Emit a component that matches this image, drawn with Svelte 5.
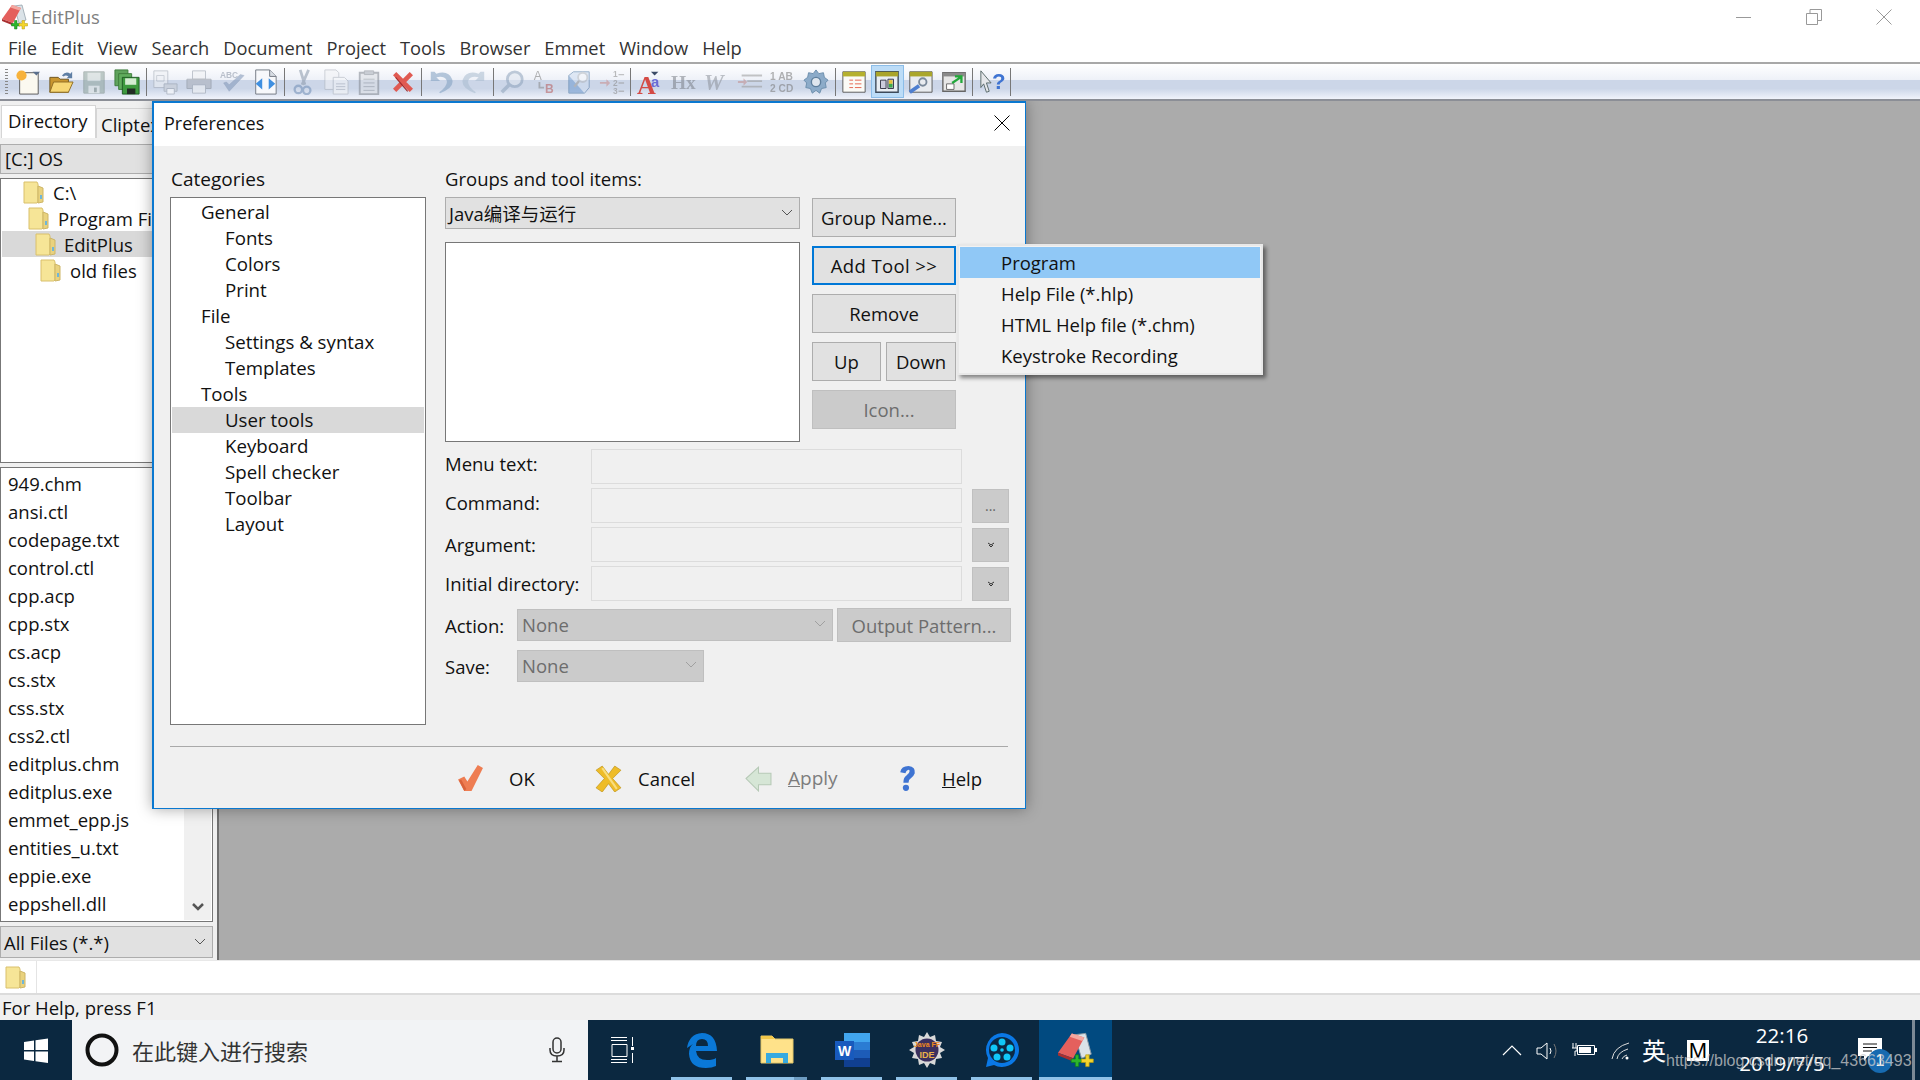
<script>
  const menus = ['File','Edit','View','Search','Document','Project','Tools','Browser','Emmet','Window','Help'];
  const files = ['949.chm','ansi.ctl','codepage.txt','control.ctl','cpp.acp','cpp.stx','cs.acp','cs.stx','css.stx','css2.ctl','editplus.chm','editplus.exe','emmet_epp.js','entities_u.txt','eppie.exe','eppshell.dll'];
  const cats = [['General',0],['Fonts',1],['Colors',1],['Print',1],['File',0],['Settings & syntax',1],['Templates',1],['Tools',0],['User tools',1],['Keyboard',1],['Spell checker',1],['Toolbar',1],['Layout',1]];
  const dirs = [['C:\\','d0'],['Program Files','d1'],['EditPlus','d2'],['old files','d3']];
</script>

{#snippet folder()}
  <svg class="fold" viewBox="0 0 22 24"><path d="M1 2h13l1 2v18l-1 1H1z" fill="#f6e597" stroke="#d9c06c"/><path d="M15 6l5 2v14l-5 1z" fill="#e9d27e" stroke="#cdb566"/><rect x="17" y="15" width="2" height="4" fill="#6fb6d8"/></svg>
{/snippet}

{#snippet logo(s)}
  <svg width={s} height={s} viewBox="0 0 26 26">
    <path d="M12 2l8-1 4 15-7 3z" fill="#dbe3e8" stroke="#8b9aa3" stroke-width=".7"/>
    <path d="M0 15L10 1l9 3-8 15z" fill="#e4605d"/><path d="M10 1l9 3-1.500 2.500-9-3z" fill="#f3a7a0"/><path d="M0 15l11 4-1 2L0 17z" fill="#a92f30"/>
    <path d="M9.500 19.500h3v-3h2.500v3h3V22h-3v3h-2.500v-3h-3z" fill="#2db52b" stroke="#0f7a1b" stroke-width=".5"/>
    <path d="M17 19.500h3v-3h2.500v3h3V22h-3v3H20v-3h-3z" fill="#f4d52c" stroke="#b59a10" stroke-width=".5"/>
  </svg>
{/snippet}

<div class="screen">
  <header class="title">
    {@render logo(26)}
    <span class="appname">EditPlus</span>
    <div class="winbtns">
      <svg width="16" height="16" viewBox="0 0 16 16"><path d="M0 8.500h15" stroke="#999" fill="none"/></svg>
      <svg width="16" height="16" viewBox="0 0 16 16"><path d="M.5 4.500h11v11H.5zM4 4V.5h11.500v11H12" stroke="#999" fill="none"/></svg>
      <svg width="16" height="16" viewBox="0 0 16 16"><path d="M.5.500l15 15M15.500.500l-15 15" stroke="#999" fill="none"/></svg>
    </div>
  </header>
  <nav class="menubar">
    {#each menus as m}<span>{m}</span>{/each}
  </nav>

  <div class="toolbar">
    <div class="grip"></div>
    <div class="tb"><svg viewBox="0 0 28 28"><path d="M5 4h20v23H5z" fill="#fbf9f0" stroke="#555"/><circle cx="7" cy="7" r="5.500" fill="#f7b23b"/><path d="M19 3h8l-4 4z" fill="#5a6f8c"/></svg></div>
    <div class="tb"><svg viewBox="0 0 28 28"><path d="M2 9h9l2 2h9v14H2z" fill="#c9962f" stroke="#6a5320"/><path d="M2 25l4-11h21l-5 11z" fill="#f7d774" stroke="#8c6a21"/><path d="M15 7q4-5 9-2l2-2v7h-6l2-2q-3-2-5 0z" fill="#5f7fa5"/></svg></div>
    <div class="tb off"><svg viewBox="0 0 28 28"><path d="M3 3h22v23H3z" fill="#8fa49c" stroke="#75857f"/><path d="M7 4h14v9H7z" fill="#cfd8d4"/><path d="M8 18h12v8H8z" fill="#dfe5e2"/><path d="M14 20h3v5h-3z" fill="#75857f"/></svg></div>
    <div class="tb"><svg viewBox="0 0 28 28"><path d="M1 1h14v17H1z" fill="#5fa35c" stroke="#3c7a3a"/><path d="M5 5h14v17H5z" fill="#60ad5d" stroke="#3c7a3a"/><path d="M9 9h18v18H9z" fill="#3d9a3e" stroke="#1e5a24"/><path d="M12 10h12v7H12z" fill="#d4ecd2"/><path d="M14 21h9v6h-9z" fill="#222d25"/></svg></div>
    <div class="sep"></div>
    <div class="tb off"><svg viewBox="0 0 28 28"><path d="M2 2h15v18H2z" fill="#eef0f4" stroke="#9aa2ad"/><path d="M5 7h8v6H5z" fill="none" stroke="#a9b0ba"/><path d="M13 16h14v8H13z" fill="#c7ccd3" stroke="#8f97a3"/><path d="M16 21h8v6h-8z" fill="#fff" stroke="#8f97a3"/></svg></div>
    <div class="tb off"><svg viewBox="0 0 28 28"><path d="M7 2h14v9H7z" fill="#f1f2f4" stroke="#8f97a3"/><path d="M1 11h26v10H1z" fill="#a8aeb7" stroke="#7f8791"/><path d="M7 17h14v9H7z" fill="#f1f2f4" stroke="#8f97a3"/></svg></div>
    <div class="tb off"><svg viewBox="0 0 28 28"><text x="1" y="10" class="abc">ABC</text><path d="M5 15l6 9L27 7l-4-1-12 11-3-3z" fill="#7f96b8" stroke="#66799a" stroke-width=".5"/></svg></div>
    <div class="tb"><svg viewBox="0 0 28 28"><path d="M4 1h15l7 7v19H4z" fill="#f7f8fb" stroke="#6f7680"/><path d="M19 1v7h7" fill="#d8dde4" stroke="#6f7680"/><path d="M11 10l-7 6 7 6zM18 10l7 6-7 6z" fill="#3f8fe0"/></svg></div>
    <div class="sep"></div>
    <div class="tb off"><svg viewBox="0 0 28 28"><path d="M20 1l-7 16M11 1l5 16" stroke="#8a98aa" stroke-width="3" fill="none"/><circle cx="9" cy="22" r="4" fill="none" stroke="#6f8db5" stroke-width="2.500"/><circle cx="18" cy="23" r="4" fill="none" stroke="#6f8db5" stroke-width="2.500"/></svg></div>
    <div class="tb off"><svg viewBox="0 0 28 28"><path d="M2 1h12l3 3v18H2z" fill="#f2f3f5" stroke="#a6acb5"/><path d="M11 9h12l4 4v14H11z" fill="#f7f8f9" stroke="#a6acb5"/><path d="M14 16h10M14 19h10M14 22h10" stroke="#a6acb5" fill="none"/></svg></div>
    <div class="tb off"><svg viewBox="0 0 28 28"><path d="M4 4h20v23H4z" fill="#dcdfe3" stroke="#80868f" stroke-width="2"/><path d="M9 2h10v4H9z" fill="#a6acb5" stroke="#80868f"/><path d="M8 11h12M8 15h12M8 19h12M8 23h12" stroke="#8d939c" fill="none"/></svg></div>
    <div class="tb"><svg viewBox="0 0 28 28"><path d="M5 5l18 18M23 5L5 23" stroke="#e05a52" stroke-width="5" fill="none"/><path d="M6 9l13 15" stroke="#a02a2a" stroke-width="1.200" fill="none"/></svg></div>
    <div class="sep"></div>
    <div class="tb off"><svg viewBox="0 0 28 28"><path d="M3 3v10h10l-4-4q8-2 11 3 2 6-8 13l1 1q16-6 13-15Q22 1 9 5L7 3z" fill="#7f9fc0"/></svg></div>
    <div class="tb off"><svg viewBox="0 0 28 28"><path d="M25 3v10H15l4-4q-8-2-11 3-2 6 8 13l-1 1Q-1 20 2 11 6 1 19 5l2-2z" fill="#a9bccf"/></svg></div>
    <div class="sep"></div>
    <div class="tb off"><svg viewBox="0 0 28 28"><circle cx="17" cy="11" r="8" fill="#dfe6ef" stroke="#8ea3bb" stroke-width="3"/><path d="M11 17l-8 8" stroke="#8ea3bb" stroke-width="4" fill="none"/></svg></div>
    <div class="tb off"><svg viewBox="0 0 28 28"><text x="2" y="12" class="lt gr">A</text><text x="14" y="26" class="lt rd">B</text><path d="M8 14v6h5" stroke="#888" stroke-width="2" fill="none"/></svg></div>
    <div class="tb off"><svg viewBox="0 0 28 28"><path d="M3 7h17v19H3z" fill="#6d99cf" stroke="#47729f"/><path d="M3 7l5-4h17v17l-5 6" fill="#cddcf0" stroke="#47729f"/><circle cx="18" cy="9" r="5" fill="#f3f6fa" stroke="#b2b8bf" stroke-width="2"/><path d="M14 13l-5 6" stroke="#999" stroke-width="2.500"/></svg></div>
    <div class="tb off"><svg viewBox="0 0 28 28"><path d="M1 14h7v-3l4 4-4 4v-3H1z" fill="#c98c8c"/><text x="15" y="9" class="num">1</text><text x="15" y="18" class="num">2</text><text x="15" y="27" class="num">3</text><path d="M21 6h6M21 15h6M21 24h6" stroke="#999" stroke-width="1.500"/></svg></div>
    <div class="sep"></div>
    <div class="tb"><svg viewBox="0 0 28 28"><text x="0" y="27" class="biga">A</text><text x="15" y="19" class="smla">a</text><path d="M15 3h8l-4 4z" fill="#3a4a66"/></svg></div>
    <div class="tb off"><svg viewBox="0 0 28 28"><text x="1" y="22" class="hx">Hx</text></svg></div>
    <div class="tb off"><svg viewBox="0 0 28 28"><text x="1" y="23" class="wi">W</text></svg></div>
    <div class="tb off"><svg viewBox="0 0 28 28"><path d="M5 7h22M11 13h16M5 19h22" stroke="#999" stroke-width="2"/><path d="M1 13h6v-3l4 4-4 4v-3H1z" fill="#c28f8f"/></svg></div>
    <div class="tb off"><svg viewBox="0 0 28 28"><text x="0" y="12" class="ab">1 AB</text><text x="0" y="25" class="ab">2 CD</text></svg></div>
    <div class="tb"><svg viewBox="0 0 28 28"><path d="M14 1l3 4 5-1 1 5 4 3-3 3 1 5-5 1-2 5-4-3-4 3-2-5-5-1 1-5-3-3 4-3 1-5 5 1z" fill="#8cabc9" stroke="#6a8cab"/><circle cx="14" cy="14" r="5" fill="#dfe6ee" stroke="#5f7f9d" stroke-width="1.500"/></svg></div>
    <div class="sep"></div>
    <div class="tb"><svg viewBox="0 0 28 28"><path d="M2 3h24v22H2z" fill="#fbfbf7" stroke="#555"/><path d="M2 3h24v5H2z" fill="#b5b02e"/><path d="M9 12h4M15 12h7M9 16h4M15 16h7M9 20h4M15 20h7" stroke="#e4604b" fill="none"/></svg></div>
    <div class="tb on"><svg viewBox="0 0 28 28"><path d="M2 3h24v22H2z" fill="#e8edf2" stroke="#3c4a5a" stroke-width="1.500"/><path d="M2 3h24v5H2z" fill="#a9a42a"/><path d="M7 12h6v9H7zM15 11h6v10h-6z" fill="#ccd" stroke="#334"/><path d="M16 12h4v4h-4z" fill="#e6c13a"/><path d="M16 16h4v4h-4z" fill="#3eaa4b"/></svg></div>
    <div class="tb"><svg viewBox="0 0 28 28"><path d="M3 3h24v22H3z" fill="#e9ecf0" stroke="#555"/><path d="M3 3h24v5H3z" fill="#aaa62b"/><circle cx="17" cy="14" r="4" fill="none" stroke="#7b8a9b" stroke-width="2"/><path d="M13 18l-10 7" stroke="#4e7fd0" stroke-width="4"/></svg></div>
    <div class="tb"><svg viewBox="0 0 28 28"><path d="M2 4h24v20H2z" fill="#e6e6e6" stroke="#666" stroke-width="1.500"/><path d="M2 4h24v4H2z" fill="#8a8a8a"/><path d="M6 16h8v6H6z" fill="#fff" stroke="#666"/><path d="M12 15l9-6M15 8h7v7" stroke="#22a83a" stroke-width="2.500" fill="none"/></svg></div>
    <div class="sep"></div>
    <div class="tb"><svg viewBox="0 0 28 28"><path d="M2 2l11 13H8l3 9-3 1-3-9-3 4z" fill="#e5e7ea" stroke="#566"/><text x="14" y="22" class="qm">?</text></svg></div>
    <div class="sep"></div>
  </div>

  <main class="main">
    <aside class="panel">
      <div class="tabs"><span class="tab act">Directory</span><span class="tab">Cliptext</span></div>
      <div class="combo drive"><span>[C:] OS</span></div>
      <div class="dirtree">
        {#each dirs as d, i}
          <div class="dirrow {d[1]}" class:hl={i === 2}>{@render folder()}<span>{d[0]}</span></div>
        {/each}
      </div>
      <div class="filelist">
        <div class="names">{#each files as f}<div class="file">{f}</div>{/each}</div>
        <div class="scroll"><svg width="14" height="10" viewBox="0 0 14 10"><path d="M2 2l5 5 5-5" stroke="#555" stroke-width="2.500" fill="none"/></svg></div>
      </div>
      <div class="combo allf"><span>All Files (*.*)</span><svg width="12" height="8" viewBox="0 0 12 8"><path d="M1 1l5 5 5-5" stroke="#555" fill="none"/></svg></div>
    </aside>

    <section class="dialog">
      <div class="dlghead">
        <span>Preferences</span>
        <svg width="16" height="16" viewBox="0 0 16 16"><path d="M.5.500l15 15M15.500.500l-15 15" stroke="#000" fill="none"/></svg>
      </div>
      <div class="dlgmain">
        <div class="catcol">
          <div class="lbl catlbl">Categories</div>
          <div class="cattree">
            {#each cats as c}
              <div class="cat" class:sub={c[1] === 1} class:sel={c[0] === 'User tools'}>{c[0]}</div>
            {/each}
          </div>
        </div>
        <div class="rightcol">
          <div class="lbl">Groups and tool items:</div>
          <div class="topgrid">
            <div class="listcol">
              <div class="combo grp"><span>Java编译与运行</span><svg width="12" height="8" viewBox="0 0 12 8"><path d="M1 1l5 5 5-5" stroke="#555" fill="none"/></svg></div>
              <div class="listbox"></div>
            </div>
            <div class="btncol">
              <div class="btn">Group Name...</div>
              <div class="btn focus">Add Tool &gt;&gt;</div>
              <div class="btn">Remove</div>
              <div class="btnrow"><div class="btn up">Up</div><div class="btn down">Down</div></div>
              <div class="btn dis icon">Icon...</div>
            </div>
          </div>
          <div class="frow first"><span class="flabel hi">Menu text:</span><div class="inp"></div></div>
          <div class="frow"><span class="flabel hi">Command:</span><div class="inp"></div><div class="side dots">...</div></div>
          <div class="frow"><span class="flabel">Argument:</span><div class="inp"></div><div class="side"><svg width="8" height="6" viewBox="0 0 8 6"><path d="M1 1l3 2 3-2M2 3l2 2 2-2" stroke="#333" fill="none"/></svg></div></div>
          <div class="frow"><span class="flabel">Initial directory:</span><div class="inp"></div><div class="side"><svg width="8" height="6" viewBox="0 0 8 6"><path d="M1 1l3 2 3-2M2 3l2 2 2-2" stroke="#333" fill="none"/></svg></div></div>
          <div class="arow action"><span class="alabel">Action:</span><div class="dcombo wa"><span>None</span><svg width="12" height="8" viewBox="0 0 12 8"><path d="M1 1l5 5 5-5" stroke="#a0a0a0" fill="none"/></svg></div><div class="btn dis outp">Output Pattern...</div></div>
          <div class="arow save"><span class="alabel">Save:</span><div class="dcombo ws"><span>None</span><svg width="12" height="8" viewBox="0 0 12 8"><path d="M1 1l5 5 5-5" stroke="#a0a0a0" fill="none"/></svg></div></div>
        </div>
      </div>
      <div class="dsep"></div>
      <div class="dfoot">
        <div class="fb f-ok"><svg viewBox="0 0 26 26"><path d="M1 14l6-3 3 5L20 0l5 3-11 22H7z" fill="#ee7d52"/><path d="M7 25l-5-10 2-1 5 9z" fill="#d9623a"/></svg><span>OK</span></div>
        <div class="fb f-cancel"><svg viewBox="0 0 26 26"><path d="M1 5l6-4 6 8 6-8 6 4-8 8 8 9-6 4-6-8-6 8-6-4 8-9z" fill="#eebc28" stroke="#b98f16" stroke-width=".6"/><path d="M7 3l14 20" stroke="#f9de7e" stroke-width="2"/></svg><span>Cancel</span></div>
        <div class="fb f-apply dim"><svg viewBox="0 0 26 26"><path d="M1 13L13 2v6h12v11H13v6z" fill="#d6e6d6" stroke="#b6c9b6"/></svg><span><u>A</u>pply</span></div>
        <div class="fb f-help"><svg viewBox="0 0 26 26"><path d="M6 7q1-6 8-6 7 1 6 7-1 3-4 5-2 1-2 4H9q0-5 3-7 3-2 3-4 0-2-2-1-1 0-2 3z" fill="#3f74d2"/><circle cx="11.500" cy="22" r="3" fill="#3f74d2"/></svg><span><u>H</u>elp</span></div>
      </div>
    </section>

    <div class="popup">
      <div class="pitem phl">Program</div>
      <div class="pitem">Help File (*.hlp)</div>
      <div class="pitem">HTML Help file (*.chm)</div>
      <div class="pitem">Keystroke Recording</div>
    </div>
  </main>

  <div class="folderbar"><div class="fcell">{@render folder()}</div></div>
  <div class="status">For Help, press F1</div>

  <footer class="taskbar">
    <div class="start"><svg width="26" height="25" viewBox="0 0 26 25"><path d="M1 4l10-1.500V12H1zM12.500 2.300L25 .5V12H12.500zM1 13.500h10V23L1 21.500zM12.500 13.500H25V25l-12.500-1.800z" fill="#fff"/></svg></div>
    <div class="search">
      <svg width="36" height="36" viewBox="0 0 36 36"><circle cx="18" cy="18" r="14.500" fill="none" stroke="#111" stroke-width="4"/></svg>
      <span class="stext">在此键入进行搜索</span>
      <svg class="mic" width="18" height="26" viewBox="0 0 18 26"><rect x="5" y="1" width="8" height="15" rx="4" fill="none" stroke="#333" stroke-width="1.500"/><path d="M2 11v2q0 6 7 6t7-6v-2M9 19v5M4 24.500h10" fill="none" stroke="#333" stroke-width="1.500"/></svg>
    </div>
    <div class="taskview"><svg width="26" height="26" viewBox="0 0 26 26"><path d="M1 .5h16M1 25.500h16M1 3.500h16M1 22.500h16M2 7.500h15v12H2zM22.500 0v9M22.500 16v10" stroke="#fff" fill="none"/><rect x="21" y="10" width="3" height="3" fill="#fff"/></svg></div>
    <div class="apps">
      <div class="app"><svg width="32" height="36" viewBox="0 0 32 36"><path d="M1 16Q3 2 16 1q14 0 15 18H10q1 9 11 9 6 0 9-2v8q-4 2-10 2Q4 36 3 22q0-7 4-10-3 2-6 4zM10 14h12q0-7-6-7t-6 7z" fill="#0a78d7"/></svg></div>
      <div class="app explorer"><svg width="34" height="30" viewBox="0 0 34 30"><path d="M1 1h11l3 3h18v24H1z" fill="#ffe28a" stroke="#e2c76b"/><path d="M1 1h11l3 3H1z" fill="#f2c84b"/><path d="M6 28V18h22v10h-5v-5H11v5z" fill="#36a9e0"/></svg></div>
      <div class="app"><svg width="36" height="36" viewBox="0 0 36 36"><path d="M10 1h26v34H10z" fill="#1d5cb8"/><path d="M10 1h26v9H10z" fill="#41a5ee"/><path d="M10 10h26v8H10z" fill="#2b7cd3"/><path d="M10 26h26v9H10z" fill="#103f91"/><rect x="1" y="9" width="19" height="19" fill="#185abd"/><text x="10.500" y="24" class="wd">W</text></svg></div>
      <div class="app"><svg width="36" height="36" viewBox="0 0 36 36"><path d="M18 0l3 5 5-2 1 6 6 1-2 5 5 3-5 3 2 5-6 1-1 6-5-2-3 5-3-5-5 2-1-6-6-1 2-5-5-3 5-3-2-5 6-1 1-6 5 2z" fill="#d8d8d8"/><circle cx="18" cy="18" r="11.500" fill="#3b2f5e"/><text x="18" y="15" class="jfx">Java FF</text><text x="18" y="26" class="jfx big">IDE</text></svg></div>
      <div class="app"><svg width="36" height="36" viewBox="0 0 36 36"><path d="M18 1a17 17 0 1 1-8 32l-8 2 2-9A17 17 0 0 1 18 1z" fill="#0a78e6"/><circle cx="18" cy="18" r="13" fill="#0b2a45"/><circle cx="18" cy="10" r="3.500" fill="#10c8f8"/><circle cx="10" cy="16" r="3.500" fill="#10c8f8"/><circle cx="26" cy="16" r="3.500" fill="#10c8f8"/><circle cx="13" cy="25" r="3.500" fill="#10c8f8"/><circle cx="23" cy="25" r="3.500" fill="#10c8f8"/><circle cx="18" cy="18" r="1.800" fill="#10c8f8"/></svg></div>
      <div class="app active">{@render logo(36)}</div>
    </div>
    <div class="tray">
      <svg class="t-chev" width="20" height="12" viewBox="0 0 20 12"><path d="M1 11l9-9 9 9" stroke="#fff" fill="none" stroke-width="1.200"/></svg>
      <svg class="t-spk" width="24" height="20" viewBox="0 0 24 20"><path d="M1 7h4l6-5v16l-6-5H1z" fill="none" stroke="#fff"/><path d="M14 7q2 3 0 6" stroke="#fff" fill="none"/><path d="M18 3q4 7 0 14" stroke="#777" fill="none"/></svg>
      <svg class="t-bat" width="26" height="16" viewBox="0 0 26 16"><path d="M6.500 3.500h17v9h-17z" fill="none" stroke="#fff"/><rect x="8" y="5" width="12" height="6" fill="#fff"/><rect x="24" y="6" width="2" height="4" fill="#fff"/><path d="M2 1v5M5 1v5M1 6h5v3H4v5" stroke="#fff" fill="none"/></svg>
      <svg class="t-wifi" width="20" height="20" viewBox="0 0 20 20"><path d="M1 18Q3 6 18 2M6 18q1-7 11-10M11 18q1-3 5-4" stroke="#ddd" fill="none"/><circle cx="16" cy="17" r="1.500" fill="#fff"/></svg>
      <span class="t-ying">英</span>
      <span class="t-m">M</span>
      <div class="clock"><div>22:16</div><div>2019/7/5</div></div>
      <div class="notif">
        <svg width="24" height="24" viewBox="0 0 24 24"><path d="M0 0h24v18H10l-4 5v-5H0z" fill="#fff"/><path d="M5 6h14M5 9.500h14M5 13h9" stroke="#111" fill="none"/></svg>
        <span class="badge">1</span>
      </div>
      <span class="edgebar"></span>
    </div>
    <span class="mark">https://blog.csdn.net/qq_43663493</span>
  </footer>
</div>

<style>
  :global(body) { margin: 0; overflow: hidden; background: #fff; }
  .screen { width: 1920px; height: 1080px; display: flex; flex-direction: column; font-family: "Open Sans", "Noto Sans CJK SC", sans-serif; font-size: 18.500px; color: #111; }
  .title { height: 32px; display: flex; align-items: center; padding: 1px 0 0 2px; box-sizing: border-box; gap: 3px; background: #fff; flex: none; }
  .appname { color: #808080; }
  .winbtns { margin-left: auto; display: flex; gap: 54px; padding-right: 28px; }
  .menubar { height: 30px; display: flex; align-items: center; padding-left: 8px; gap: 14px; font-size: 18.300px; background: #fff; border-bottom: 2px solid #a8a8a8; flex: none; color: #333; }
  .toolbar { height: 35px; flex: none; display: flex; align-items: center; padding-left: 5px; background: linear-gradient(#fff 0, #eef1f8 45%, #ccd6e8 46%, #ccd6e8 70%, #f0f3fb 100%); border-bottom: 2px solid #8b8e96; }
  .grip { width: 3px; height: 26px; margin-right: 3px; background: repeating-linear-gradient(#888 0 1px, transparent 1px 3px); }
  .tb { width: 33.200px; height: 33px; display: flex; align-items: center; justify-content: center; flex: none; box-sizing: border-box; }
  .tb svg { width: 26px; height: 26px; filter: blur(.35px); }
  .tb.off svg { opacity: .55; }
  .tb.on { background: #bcdcf7; border: 1px solid #8cbde8; }
  .sep { width: 1px; height: 28px; background: #777; margin: 0 2px; flex: none; }
  .abc { font: bold 9px "Liberation Sans", sans-serif; fill: #8a94a5; }
  .lt { font: 13px "Liberation Sans", sans-serif; } .gr { fill: #777; } .rd { fill: #b65a5a; font-weight: bold; }
  .num { font: bold 9px "Liberation Sans", sans-serif; fill: #888; }
  .biga { font: bold 28px "Liberation Serif", serif; fill: #d44a45; }
  .smla { font: bold 16px "Liberation Sans", sans-serif; fill: #6a6ad6; }
  .hx { font: bold 21px "Liberation Serif", serif; fill: #7b8088; }
  .wi { font: italic bold 24px "Liberation Serif", serif; fill: #8d929a; }
  .ab { font: bold 11px "Liberation Sans", sans-serif; fill: #777; }
  .qm { font: bold 24px "Liberation Sans", sans-serif; fill: #3f74d2; }

  .main { flex: 1; min-height: 0; position: relative; display: flex; background: #ababab; overflow: hidden; }
  .panel { width: 219px; box-sizing: border-box; flex: none; background: #f0f0f0; border-right: 2px solid #6f6f6f; display: flex; flex-direction: column; font-size: 18.500px; }
  .tabs { height: 33px; margin-top: 4px; display: flex; padding-left: 1px; flex: none; }
  .tab { padding: 3px 4px 0 4px; box-sizing: border-box; height: 30px; margin-top: 3px; border: 1px solid #d5d5d5; border-bottom: 0; }
  .tab.act { background: #fff; width: 95px; height: 33px; margin-top: 0; padding-top: 2px; padding-left: 6px; }
  .combo { background: #e1e1e1; border: 1px solid #adadad; box-sizing: border-box; display: flex; align-items: center; justify-content: space-between; flex: none; }
  .drive { height: 30px; margin: 6px 4px 0 0; padding: 0 0 2px 4px; }
  .dirtree { height: 285px; margin: 4px 4px 0 0; border: 1px solid #777; background: #fff; box-sizing: border-box; flex: none; }
  .dirrow { height: 26px; display: flex; align-items: center; white-space: nowrap; overflow: hidden; gap: 8px; }
  .fold { width: 22px; height: 24px; flex: none; }
  .d0 { padding-left: 22px; } .d1 { padding-left: 27px; } .d2 { padding-left: 33px; gap: 7px; } .d3 { padding-left: 39px; }
  .hl { background: #d9d9d9; margin-left: 1px; }
  .filelist { height: 455px; margin: 4px 4px 0 0; border: 1px solid #777; background: #fff; box-sizing: border-box; display: flex; flex: none; }
  .names { flex: 1; padding: 2px 0 0 7px; }
  .file { height: 28px; line-height: 28px; white-space: nowrap; }
  .scroll { width: 27px; background: #f0f0f0; margin: 1px; display: flex; align-items: flex-end; justify-content: center; padding-bottom: 8px; box-sizing: border-box; }
  .allf { height: 32px; margin: 4px 4px 0 0; padding: 0 6px 0 3px; }

  .dialog { position: absolute; left: 152px; top: 0; width: 874px; height: 708px; box-sizing: border-box; background: #f0f0f0; border: 1px solid #0a78d0; border-width: 2px 1px 1px 2px; box-shadow: 0 0 14px rgba(0,0,0,.35); display: flex; flex-direction: column; }
  .dlghead { height: 43px; flex: none; background: #fff; display: flex; align-items: center; justify-content: space-between; padding: 0 15px 3px 10px; box-sizing: border-box; font-size: 18px; }
  .dlgmain { display: flex; padding: 18px 0 0 16px; height: 580px; box-sizing: border-box; flex: none; }
  .lbl { height: 33px; box-sizing: border-box; padding-top: 2px; line-height: 26px; flex: none; }
  .catlbl { padding-left: 1px; font-size: 19px; }
  .catcol { width: 256px; flex: none; display: flex; flex-direction: column; }
  .cattree { height: 528px; border: 1px solid #777; background: #fff; box-sizing: border-box; padding: 1px; flex: none; font-size: 18.700px; }
  .cat { height: 26px; line-height: 26px; padding-left: 29px; }
  .cat.sub { padding-left: 53px; }
  .cat.sel { background: #d9d9d9; }
  .rightcol { margin-left: 19px; display: flex; flex-direction: column; }
  .topgrid { display: flex; gap: 12px; height: 245px; flex: none; }
  .listcol { width: 355px; display: flex; flex-direction: column; }
  .grp { height: 32px; padding: 0 6px 0 3px; }
  .listbox { height: 200px; margin-top: 13px; border: 1px solid #777; background: #fff; box-sizing: border-box; }
  .btncol { width: 144px; padding-top: 1px; display: flex; flex-direction: column; gap: 9px; }
  .btn { height: 39px; background: #e1e1e1; border: 1px solid #adadad; box-sizing: border-box; display: flex; align-items: center; justify-content: center; flex: none; white-space: nowrap; }
  .btn.focus { border: 2px solid #0078d7; letter-spacing: .4px; }
  .btn.dis { background: #cbcbcb; border-color: #bfbfbf; color: #6d6d6d; }
  .btn.icon { padding-left: 10px; }
  .btnrow { display: flex; gap: 5px; }
  .up { width: 69px; } .down { width: 70px; }
  .frow { display: flex; height: 35px; margin-top: 4px; align-items: center; flex: none; }
  .frow.first { margin-top: 7px; }
  .flabel { width: 146px; flex: none; white-space: nowrap; }
  .flabel.hi { margin-bottom: 6px; }
  .inp { width: 371px; height: 35px; border: 1px solid #dcdcdc; box-sizing: border-box; }
  .side { width: 37px; height: 34px; margin-left: 10px; background: #cbcbcb; border: 1px solid #c0c0c0; box-sizing: border-box; display: flex; align-items: center; justify-content: center; color: #666; font-size: 14px; }
  .arow { display: flex; align-items: center; flex: none; }
  .action { margin-top: 7px; height: 34px; }
  .save { margin-top: 8px; height: 32px; }
  .alabel { width: 72px; flex: none; }
  .dcombo { height: 32px; background: #cbcbcb; border: 1px solid #bfbfbf; box-sizing: border-box; display: flex; align-items: center; justify-content: space-between; padding: 0 6px 2px 4px; color: #6d6d6d; flex: none; }
  .wa { width: 316px; } .ws { width: 187px; }
  .outp { width: 174px; height: 34px; margin-left: 4px; }
  .dsep { height: 1px; background: #a9a9a9; margin: 20px 17px 0 16px; flex: none; }
  .dfoot { flex: 1; display: flex; padding: 1px 0 0 303px; align-items: center; }
  .fb { display: flex; align-items: center; flex: none; }
  .fb svg { width: 27px; height: 27px; flex: none; }
  .f-ok { width: 138px; gap: 25px; } .f-cancel { width: 150px; gap: 16px; } .f-apply { width: 149px; gap: 16px; font-size: 19px; } .f-help { width: 100px; gap: 21px; }
  .dim { color: #7d7d7d; }
  .popup { position: absolute; left: 957px; top: 143px; width: 306px; height: 131px; box-sizing: border-box; background: #f2f2f2; border: 2px solid #e8e8e8; padding: 1px; box-shadow: 3px 3px 4px rgba(0,0,0,.45); }
  .pitem { height: 31px; line-height: 31px; padding-left: 41px; white-space: nowrap; }
  .phl { background: #90c8f6; }

  .folderbar { height: 33px; flex: none; background: #fff; border-top: 1px solid #e8e8e8; box-sizing: border-box; display: flex; }
  .fcell { width: 37px; border-right: 1px solid #e4e4e4; padding: 4px 0 0 5px; box-sizing: border-box; }
  .status { height: 27px; flex: none; box-sizing: border-box; background: #f0f0f0; border-top: 2px solid #dcdcdc; padding-left: 2px; line-height: 25px; }

  .taskbar { height: 60px; flex: none; position: relative; background: #0b2840; display: flex; align-items: center; color: #fff; }
  .start { width: 72px; display: flex; justify-content: center; flex: none; }
  .search { width: 516px; height: 60px; background: #f2f3f5; display: flex; align-items: center; padding-left: 12px; box-sizing: border-box; flex: none; color: #333; }
  .stext { font-size: 22px; margin-left: 12px; font-family: "Noto Sans CJK SC", sans-serif; }
  .mic { margin-left: auto; margin-right: 22px; }
  .taskview { width: 70px; display: flex; justify-content: center; flex: none; }
  .apps { display: flex; margin-left: 6px; height: 60px; }
  .app { width: 75px; height: 60px; display: flex; align-items: center; justify-content: center; box-sizing: border-box; flex: none; position: relative; }
  .app::after { content: ""; position: absolute; left: 7px; right: 7px; bottom: 0; height: 3px; background: #90c2e8; }
  .explorer::after { background: linear-gradient(to right, #90c2e8 79%, #6d9cc2 79%); }
  .app.active { background: #014a80; width: 73px; }
  .app.active::after { left: 0; right: 0; }
  .wd { font: bold 14px "Liberation Sans", sans-serif; fill: #fff; text-anchor: middle; }
  .jfx { font: bold 7px "Liberation Sans", sans-serif; fill: #f08a1d; text-anchor: middle; }
  .jfx.big { font-size: 9px; fill: #e8b04a; }
  .tray { position: absolute; left: 0; top: 0; width: 100%; height: 100%; pointer-events: none; }
  .tray > * { position: absolute; }
  .t-chev { left: 1502px; top: 24px; } .t-spk { left: 1536px; top: 21px; } .t-bat { left: 1571px; top: 22px; } .t-wifi { left: 1611px; top: 21px; }
  .t-ying { left: 1642px; top: 16px; font: 24px "Noto Sans CJK SC", sans-serif; color: #fff; line-height: 28px; }
  .t-m { left: 1687px; top: 20px; width: 22px; height: 21px; background: #fff; color: #000; font: 22px/22px "Liberation Sans", sans-serif; text-align: center; }
  .clock { left: 1722px; top: 1px; width: 120px; text-align: center; font: 20.500px/28px "Open Sans", sans-serif; }
  .notif { left: 1858px; top: 18px; width: 50px; height: 40px; }
  .notif svg { position: absolute; left: 0; top: 0; }
  .badge { position: absolute; left: 10px; top: 11px; width: 24px; height: 24px; border-radius: 50%; background: #176ab0; font: 16px/24px "Liberation Sans", sans-serif; text-align: center; color: #fff; }
  .edgebar { left: 1912px; top: 0; width: 3px; height: 60px; background: #7d8a96; }
  .mark { position: absolute; left: 1666px; top: 29px; font: 16px/24px "Liberation Sans", sans-serif; color: rgba(205,205,205,.75); white-space: nowrap; }
</style>
